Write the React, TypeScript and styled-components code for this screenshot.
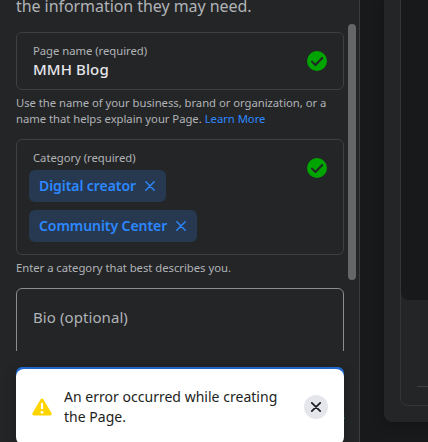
import React from 'react';
import styled, { createGlobalStyle } from 'styled-components';

const GlobalStyle = createGlobalStyle`
  * { box-sizing: border-box; }
  html, body { margin: 0; background: #18191a; overflow: hidden; }
  body { font-family: "Noto Sans", "Open Sans", sans-serif; color: #b0b3b8; }
`;

const Page = styled.div`
  display: flex;
  width: 428px;
  height: 442px;
  overflow: hidden;
  background: #18191a;
`;

const Sidebar = styled.aside`
  position: relative;
  z-index: 1;
  display: flex;
  flex-direction: column;
  flex: 0 0 360px;
  width: 360px;
  min-width: 0;
  background: #242526;
  border-right: 1px solid #3b3c3e;
`;

const Text = styled.span<{ $size: number; $line: number; $spacing?: number; $weight?: number; $color?: string }>`
  display: block;
  white-space: nowrap;
  font-size: ${p => p.$size}px;
  line-height: ${p => p.$line}px;
  letter-spacing: ${p => p.$spacing ?? 0}px;
  font-weight: ${p => p.$weight ?? 400};
  color: ${p => p.$color ?? '#b0b3b8'};
`;

const Intro = styled.div`
  flex: 0 0 24px;
  height: 24px;
  padding: 0 16px;
`;

const Scroller = styled.div`
  display: flex;
  flex: 0 0 327px;
  height: 327px;
  overflow: hidden;
`;

const Form = styled.div`
  flex: 0 0 328px;
  margin-left: 16px;
  padding-top: 8px;
`;

const ScrollThumb = styled.div`
  width: 8px;
  height: 256px;
  margin-left: 4px;
  border-radius: 4px;
  background: #656668;
`;

const Field = styled.div<{ $height: number; $active?: boolean }>`
  display: flex;
  justify-content: space-between;
  height: ${p => p.$height}px;
  padding: 0 16px;
  border: 1px solid ${p => (p.$active ? '#8b8d90' : '#3e4042')};
  border-radius: 6px;
`;

const FieldBody = styled.div<{ $top: number }>`
  padding-top: ${p => p.$top}px;
`;

const CheckIcon = styled.svg`
  width: 20px;
  height: 20px;
  margin-top: 18px;
  flex: none;
`;

const Hint = styled.div`
  padding: 5px 0 12px;
`;

const HintRow = styled.div`
  display: flex;
  gap: 3px;
`;

const Chips = styled.div`
  display: flex;
  flex-direction: column;
  align-items: flex-start;
  gap: 8px;
  margin: 4px 0 0 -4px;
`;

const Chip = styled.div<{ $width: number }>`
  display: flex;
  align-items: center;
  justify-content: space-between;
  width: ${p => p.$width}px;
  height: 32px;
  padding: 0 11px 0 10px;
  border-radius: 6px;
  background: #263951;
`;

const Footer = styled.footer`
  display: flex;
  flex-direction: column;
  height: 91px;
  padding: 16px 14px 0 16px;
  background: #242526;
`;

const CreateButton = styled.div`
  height: 36px;
  margin-right: 1px;
  border-radius: 6px;
  background: #216fdb;
`;

const FooterLine = styled.div`
  height: 16px;
  margin-top: 5px;
  font-size: 11px;
  line-height: 16px;
  text-align: right;
  color: #2d88ff;
`;

const Toast = styled.div`
  position: absolute;
  left: 16px;
  top: 369px;
  display: flex;
  align-items: center;
  width: 328px;
  height: 76px;
  padding: 0 16px;
  border-radius: 8px;
  background: #fff;
  box-shadow: 0 2px 12px rgba(0, 0, 0, 0.25);
`;

const Message = styled.div`
  flex: 1;
  margin: 0 0 0 12px;
`;

const WarningIcon = styled.svg`
  width: 20px;
  height: 18px;
`;

const CloseButton = styled.button`
  display: grid;
  place-items: center;
  width: 24px;
  height: 24px;
  padding: 0;
  border: 0;
  border-radius: 50%;
  background: #e4e6eb;
`;

const Main = styled.main`
  flex: 1;
  min-width: 0;
  padding-left: 24px;
`;

const Preview = styled.section`
  width: 80px;
  height: 422px;
  padding-left: 16px;
  border-radius: 0 0 0 8px;
  background: #242526;
  box-shadow: 0 2px 12px rgba(0, 0, 0, 0.25);
`;

const PreviewFrame = styled.div`
  height: 406px;
  border: solid #343537;
  border-width: 0 0 1px 1px;
  border-radius: 0 0 0 8px;
`;

const Cover = styled.div`
  height: 300px;
  border-radius: 0 0 0 8px;
  background: #18191a;
`;

const Divider = styled.div`
  height: 1px;
  margin: 86px 0 0 16px;
  background: #3e4042;
`;

const Check = () => (
  <CheckIcon viewBox="0 0 20 20">
    <circle cx="10" cy="10" r="10" fill="#00a400" />
    <path d="M5 10.6 8.4 14 15.2 7" fill="none" stroke="#242526" strokeWidth="2" strokeLinecap="round" strokeLinejoin="round" />
  </CheckIcon>
);

const Cross = ({ size, color, weight }: { size: number; color: string; weight: number }) => (
  <svg width={size} height={size} viewBox="0 0 10 10">
    <path d="M.8.8 9.2 9.2M9.2.8.8 9.2" fill="none" stroke={color} strokeWidth={weight} strokeLinecap="round" />
  </svg>
);

const Tag = ({ label, width }: { label: string; width: number }) => (
  <Chip $width={width}>
    <Text $size={14} $line={20} $weight={600} $spacing={-0.07} $color="#2d88ff">{label}</Text>
    <Cross size={10} color="#2d88ff" weight={1.4} />
  </Chip>
);

export default function App() {
  return (
    <>
      <GlobalStyle />
      <Page>
        <Sidebar>
          <Intro>
            <Text $size={16} $line={13} $spacing={-0.06}>the information they may need.</Text>
          </Intro>
          <Scroller>
            <Form>
              <Field $height={58}>
                <FieldBody $top={10}>
                  <Text $size={11.3} $line={16} $spacing={-0.04}>Page name (required)</Text>
                  <Text $size={15} $line={20} $weight={500} $spacing={0.1} $color="#e4e6eb">MMH Blog</Text>
                </FieldBody>
                <Check />
              </Field>
              <Hint>
                <Text $size={11.3} $line={16} $spacing={-0.04}>Use the name of your business, brand or organization, or a</Text>
                <HintRow>
                  <Text $size={11.3} $line={16} $spacing={-0.04}>name that helps explain your Page.</Text>
                  <Text $size={11.3} $line={16} $spacing={-0.04} $color="#2d88ff">Learn More</Text>
                </HintRow>
              </Hint>
              <Field $height={116}>
                <FieldBody $top={10}>
                  <Text $size={11.3} $line={16} $spacing={-0.04}>Category (required)</Text>
                  <Chips>
                    <Tag label="Digital creator" width={137} />
                    <Tag label="Community Center" width={168} />
                  </Chips>
                </FieldBody>
                <Check />
              </Field>
              <Hint>
                <Text $size={11.3} $line={16} $spacing={-0.03}>Enter a category that best describes you.</Text>
              </Hint>
              <Field $height={100} $active>
                <FieldBody $top={18}>
                  <Text $size={15} $line={20} $spacing={0.08}>Bio (optional)</Text>
                </FieldBody>
              </Field>
            </Form>
            <ScrollThumb />
          </Scroller>
          <Footer>
            <CreateButton />
            <FooterLine>s</FooterLine>
          </Footer>
          <Toast>
            <WarningIcon viewBox="0 0 20 18">
              <path d="M8.5 1.4Q10-.6 11.5 1.4L19.5 15Q20.5 17.2 18 17.4H2Q-.5 17.2.5 15Z" fill="#ffd500" />
              <path d="M10 5.8v4.4" stroke="#fff" strokeWidth="2.2" strokeLinecap="round" />
              <circle cx="10" cy="14.3" r="1.4" fill="#fff" />
            </WarningIcon>
            <Message>
              <Text $size={14} $line={20} $spacing={0.02} $color="#1c1e21">An error occurred while creating</Text>
              <Text $size={14} $line={20} $spacing={0.02} $color="#1c1e21">the Page.</Text>
            </Message>
            <CloseButton aria-label="Close">
              <Cross size={10} color="#1c1e21" weight={1.7} />
            </CloseButton>
          </Toast>
        </Sidebar>
        <Main>
          <Preview>
            <PreviewFrame>
              <Cover />
              <Divider />
            </PreviewFrame>
          </Preview>
        </Main>
      </Page>
    </>
  );
}
